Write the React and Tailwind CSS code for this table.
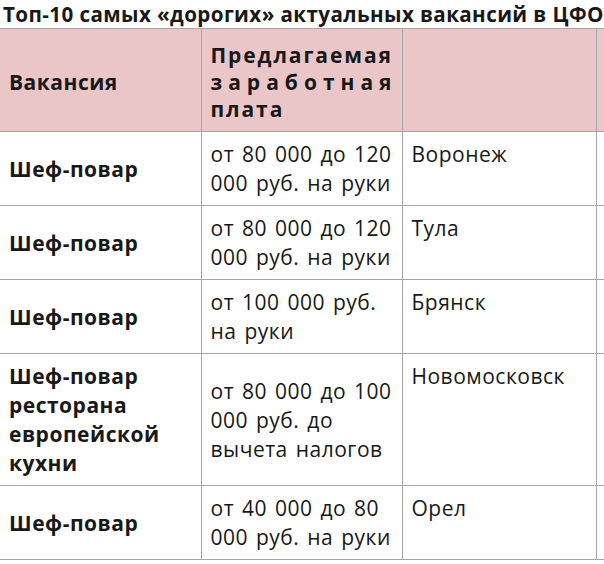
import React from 'react';

const ROWS = [
  { job: ['Шеф-повар'], pay: ['от 80 000 до 120', '000 руб. на руки'], city: 'Воронеж' },
  { job: ['Шеф-повар'], pay: ['от 80 000 до 120', '000 руб. на руки'], city: 'Тула' },
  { job: ['Шеф-повар'], pay: ['от 100 000 руб.', 'на руки'], city: 'Брянск' },
  {
    job: ['Шеф-повар', 'ресторана', 'европейской', 'кухни'],
    pay: ['от 80 000 до 100', '000 руб. до', 'вычета налогов'],
    city: 'Новомосковск',
  },
  { job: ['Шеф-повар'], pay: ['от 40 000 до 80', '000 руб. на руки'], city: 'Орел' },
];

// header line that is spread letter by letter, like justified text in the source
function Spread({ text }) {
  return (
    <div className="flex justify-between">
      {text.split('').map((ch, i) => (
        <span key={i}>{ch}</span>
      ))}
    </div>
  );
}

export default function App() {
  return (
    <div className="w-[604px] h-[564px] overflow-hidden bg-white text-[#181818] font-['Open_Sans',sans-serif]">
      <div className="h-[28px] pl-[3px] pt-[1px] text-[20.6px] leading-[26px] font-bold tracking-[0.4px] whitespace-nowrap">
        Топ-10 самых «дорогих» актуальных вакансий в ЦФО
      </div>
      <table className="border-collapse table-fixed w-[640px] text-[21px] leading-[29px] tracking-[0.5px] [word-spacing:2px]">
        <colgroup>
          <col className="w-[201px]" />
          <col className="w-[201px]" />
          <col className="w-[194px]" />
          <col className="w-[44px]" />
        </colgroup>
        <thead>
          <tr className="bg-[#ebc6c9] h-[103px]">
            <th className="border border-l-0 border-[#a9a3a3] pl-[9px] pr-[10px] pt-[4px] text-left align-middle font-bold">
              Вакансия
            </th>
            <th className="border border-[#a9a3a3] pl-[9px] pr-[8px] pt-[5px] text-left align-middle font-bold leading-[27px] tracking-[1.9px]">
              <div className="whitespace-nowrap">Предлагаемая</div>
              <Spread text="заработная" />
              <div>плата</div>
            </th>
            <th className="border border-[#a9a3a3]" />
            <th className="border border-[#a9a3a3]" />
          </tr>
        </thead>
        <tbody>
          {ROWS.map((r, i) => (
            <tr key={i}>
              <td className="border border-l-0 border-[#a9a3a3] pl-[9px] pr-[10px] pt-[8px] pb-[7px] align-middle font-bold">
                {r.job.map((l, j) => (
                  <div key={j}>{l}</div>
                ))}
              </td>
              <td className="border border-[#a9a3a3] pl-[9px] pr-[10px] pt-[8px] pb-[7px] align-middle">
                {r.pay.map((l, j) => (
                  <div key={j} className="whitespace-nowrap">{l}</div>
                ))}
              </td>
              <td className="border border-[#a9a3a3] pl-[9px] pr-[10px] pt-[8px] pb-[7px] align-top">{r.city}</td>
              <td className="border border-[#a9a3a3]" />
            </tr>
          ))}
        </tbody>
      </table>
    </div>
  );
}
